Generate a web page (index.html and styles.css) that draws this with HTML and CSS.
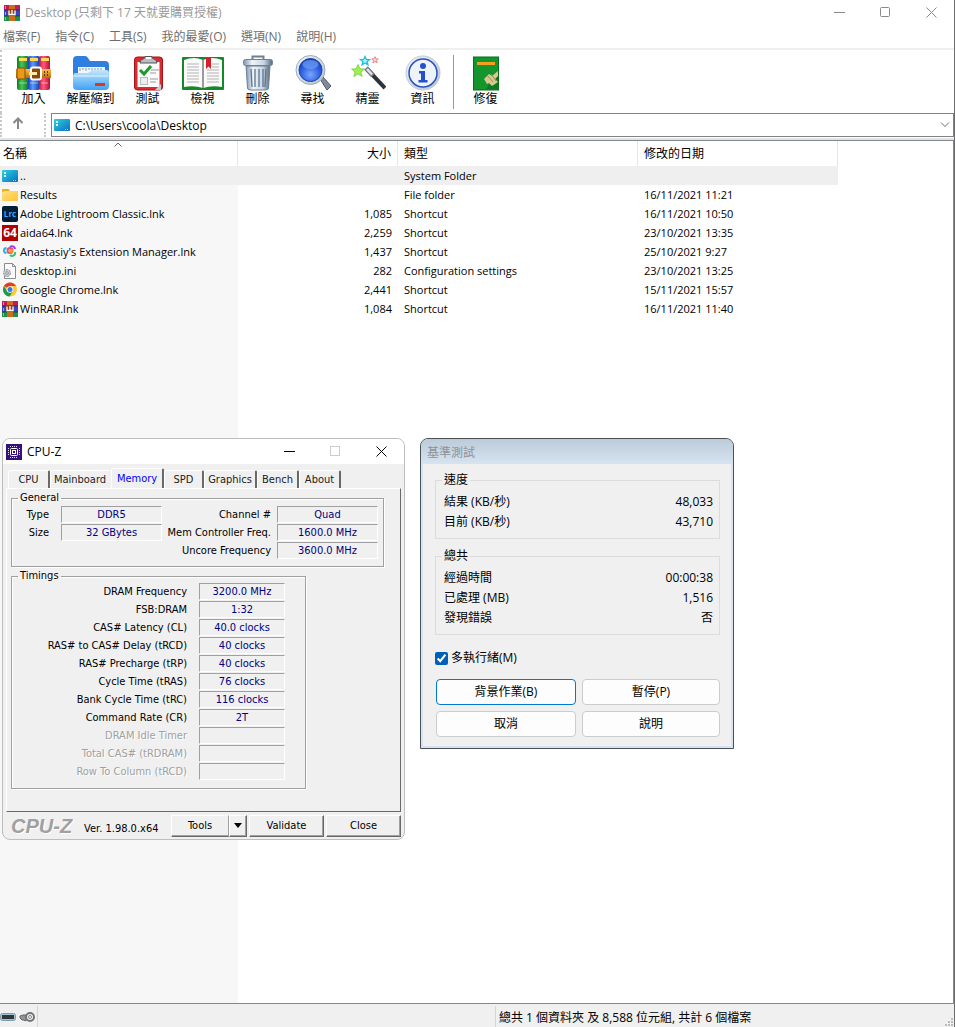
FILE: index.html
```html
<!DOCTYPE html>
<html lang="zh-Hant">
<head>
<meta charset="utf-8">
<title>Desktop</title>
<link rel="stylesheet" href="styles.css">
</head>
<body>
<svg class="defs" aria-hidden="true">
  <defs>
    <linearGradient id="gDesk" x1="0" y1="0" x2="1" y2="1"><stop offset="0" stop-color="#2fd0dc"/><stop offset="1" stop-color="#0a6fc2"/></linearGradient>
    <linearGradient id="gFold" x1="0" y1="0" x2="0" y2="1"><stop offset="0" stop-color="#c3e6ff"/><stop offset="1" stop-color="#3fa2f5"/></linearGradient>
    <linearGradient id="gYel" x1="0" y1="0" x2="1" y2="1"><stop offset="0" stop-color="#ffe187"/><stop offset="1" stop-color="#fdc52f"/></linearGradient>
    <linearGradient id="gBin" x1="0" y1="0" x2="1" y2="0"><stop offset="0" stop-color="#7f96ae"/><stop offset=".3" stop-color="#eef4f9"/><stop offset=".7" stop-color="#c9d6e3"/><stop offset="1" stop-color="#54697f"/></linearGradient>
    <radialGradient id="gLens" cx=".5" cy=".7" r=".7"><stop offset="0" stop-color="#7aa6ff"/><stop offset=".6" stop-color="#2d5fe0"/><stop offset="1" stop-color="#133ab4"/></radialGradient>
    <linearGradient id="gSteel" x1="0" y1="0" x2="1" y2="1"><stop offset="0" stop-color="#f4f7fa"/><stop offset="1" stop-color="#b4c0cc"/></linearGradient>
    <linearGradient id="bR" x1="0" y1="0" x2="1" y2="0"><stop offset="0" stop-color="#c4143c"/><stop offset=".4" stop-color="#ff5a7c"/><stop offset="1" stop-color="#b80f35"/></linearGradient>
    <linearGradient id="bG" x1="0" y1="0" x2="1" y2="0"><stop offset="0" stop-color="#0d7c22"/><stop offset=".4" stop-color="#45c656"/><stop offset="1" stop-color="#087019"/></linearGradient>
    <linearGradient id="bB" x1="0" y1="0" x2="1" y2="0"><stop offset="0" stop-color="#1c3fb8"/><stop offset=".4" stop-color="#5b9cff"/><stop offset="1" stop-color="#1636a0"/></linearGradient>
    <linearGradient id="gBelt" x1="0" y1="0" x2="0" y2="1"><stop offset="0" stop-color="#ffc24a"/><stop offset="1" stop-color="#b96a05"/></linearGradient>
    <symbol id="desk" viewBox="0 0 16 16"><rect y="2" width="16" height="12" rx="1" fill="url(#gDesk)"/><path d="M2 4h2v2H2zM2 7h2v2H2z" fill="#d8f6fb"/><path d="M11 12h1v1h-1zM13 12h1v1h-1z" fill="#9bdcf5"/></symbol>
    <symbol id="books" viewBox="0 0 16 16"><path fill="#c21c52" d="M0 0h16v5H0z"/><path fill="#3c44c4" d="M0 5h16v6H0z"/><path fill="#1b9448" d="M0 11h16v5H0z"/><path fill="#2a1440" d="M0 4.500h16v1H0zM0 10.500h16v1H0z" opacity=".6"/><path fill="#e8a020" d="M1 1h1v3H1zM1 7h1v3H1zM1 12h1v3H1z"/><path fill="#d06a1c" d="M5 0h6v16H5z"/><path fill="#8c3f0c" d="M4 4h8v7H4z"/><path d="M5 5.500v4h6v-4M8 5v4" stroke="#fff" stroke-width="1.300" fill="none"/></symbol>
    <symbol id="folder" viewBox="0 0 16 16"><path fill="#f0ac13" d="M0 3a1 1 0 0 1 1-1h5l2 2h7a1 1 0 0 1 1 1v3H0z"/><rect y="4" width="16" height="10" rx="1" fill="url(#gYel)"/><path d="M0 5V4h6l2-2" fill="#f0ac13"/></symbol>
    <path id="star" d="M0-10L3-3.500 10-3 4.500 1.500 6.500 8.500 0 4.500-6.500 8.500-4.500 1.500-10-3-3-3.500z"/>
  </defs>
</svg>

<main class="rar">
  <header class="titlebar">
    <svg class="ico16"><use href="#books"/></svg>
    <h1>Desktop (只剩下 17 天就要購買授權)</h1>
    <div class="controls">
      <button aria-label="最小化"><svg width="11" height="11"><path d="M0 5.500h11"/></svg></button>
      <button aria-label="最大化"><svg width="11" height="11"><rect x=".5" y=".5" width="9" height="9" rx="1"/></svg></button>
      <button aria-label="關閉"><svg width="11" height="11"><path d="M.5.500l10 10M10.500.500l-10 10"/></svg></button>
    </div>
  </header>
  <nav class="menubar">
    <button>檔案(F)</button><button>指令(C)</button><button>工具(S)</button><button>我的最愛(O)</button><button>選項(N)</button><button>說明(H)</button>
  </nav>
  <div class="toolbar">
    <button>
      <svg viewBox="0 0 36 36"><rect x="1" y="1" width="12" height="34" rx="2" fill="url(#bG)"/><rect x="12" y="1" width="12" height="34" rx="2" fill="url(#bB)"/><rect x="23" y="1" width="11" height="34" rx="2" fill="url(#bR)"/><path d="M3 3h8v3H3zM14 3h8v3h-8zM25 3h8v3h-8z" fill="#ffd95a"/><path d="M3 28h8M14 28h8M25 28h7" stroke="#fff" stroke-opacity=".5"/><rect y="14" width="35" height="9" fill="url(#gBelt)"/><rect x="1" y="13" width="8" height="11" rx="1" fill="#e79a1c" stroke="#8c4d03"/><rect x="15" y="12.500" width="10" height="12" rx="2" fill="#8a4a07" stroke="#fff" stroke-width="2"/><path d="M13 18.500h8" stroke="#ffe9b0" stroke-width="3"/><path d="M28 17h1M31 17h1M28 20h1M31 20h1" stroke="#6b3903" stroke-width="2"/></svg>
      加入</button>
    <button class="wide">
      <svg viewBox="0 0 36 36"><path d="M0 5q0-4 4-4h8q2 0 3 2l2 3h15q4 0 4 4v20H0z" fill="#2f7fe0"/><rect x="5" y="12" width="27" height="14" fill="#f3f7fb"/><path d="M7 13v3M10 13v2M13 13v3M16 13v2M19 13v3M22 13v2M25 13v3M28 13v2" stroke="#8c9aaa"/><path d="M0 21q0-3 3-3h12l4-3h14q3 0 3 3v13q0 4-4 4H4q-4 0-4-4z" fill="url(#gFold)"/><path d="M1 21h34" stroke="#e6f5ff"/><path d="M22 28h10v3H22z" fill="#d93a1c"/></svg>
      解壓縮到</button>
    <button>
      <svg viewBox="0 0 36 36"><rect x="4.500" y="2" width="28" height="33" rx="3" fill="#dc2a2d" stroke="#a3131a"/><path d="M7.500 7h22v25h-22z" fill="#fafafa"/><path d="M10 8q0-3 3-4 2 0 2-2.500h7q0 2.500 2 2.500 3 1 3 4z" fill="#b9bec4" stroke="#535860"/><path d="M16 3h5" stroke="#fff" stroke-width="2"/><path d="M10 15l4 4 7-8" fill="none" stroke="#1c9a2c" stroke-width="3"/><rect x="10.500" y="22.500" width="7" height="7" fill="#eee" stroke="#bbb"/><path d="M21 15h8M20 18h6M20 24h8M20 27h6" stroke="#999"/><path d="M25 35l6-6v6z" fill="#c9ccd0"/></svg>
      測試</button>
    <button>
      <svg class="book" viewBox="0 0 42 36"><rect y="2" width="42" height="33" rx="1" fill="#14882a"/><path d="M2 5q10-4 19 0 9-4 19 0v27q-10-2-19 1-9-3-19-1z" fill="#fafafa"/><path d="M21 5v28" stroke="#9b9b9b" stroke-width="2"/><path d="M5 9h12M5 12h12M5 15h12M5 18h12M5 21h12M5 24h12M5 27h12M30 9h7M30 12h7M25 15h12M25 18h12M25 21h12M25 24h12M25 27h12" stroke="#b3b3b3"/><path d="M24 3h5v11l-2.500-2.500L24 14z" fill="#d3202b"/></svg>
      檢視</button>
    <button>
      <svg viewBox="0 0 36 36"><path d="M12.500 5V1.500h11V5" fill="none" stroke="#6d8197" stroke-width="2"/><path d="M6 11h24l-1.500 22q0 2-3 2h-15q-3 0-3-2z" fill="url(#gBin)" stroke="#6c8299"/><path d="M11 14l1 18M15 14v18M19 14v18M23 14v18M26 14l-1 18" stroke="#5f768e" stroke-width="1.300"/><rect x="3.500" y="4.500" width="29" height="6" rx="2" fill="url(#gBin)" stroke="#6c8299"/></svg>
      刪除</button>
    <button>
      <svg viewBox="0 0 36 36"><path d="M25 24l3-2 8 9-4 4z" fill="#818c98" stroke="#515a66"/><circle cx="15.500" cy="15" r="14.500" fill="url(#gSteel)" stroke="#9aabbd"/><circle cx="15.500" cy="15" r="11.500" fill="url(#gLens)" stroke="#1d44a8"/><ellipse cx="15.500" cy="9.500" rx="8" ry="4.500" fill="#6f9cf3" opacity=".7"/></svg>
      尋找</button>
    <button>
      <svg viewBox="0 0 36 36"><path d="M17 14l18 19" stroke="#2f3237" stroke-width="4"/><path d="M16 13l7 7.500" stroke="#777d84" stroke-width="5"/><path d="M17 14l5 5.500" stroke="#dfe4e8" stroke-width="2.500"/><use href="#star" transform="translate(8 16) scale(.65)" fill="#9df04e" stroke="#62c426"/><use href="#star" transform="translate(15 6) scale(.45)" fill="#a5f3ff" stroke="#22bde8" stroke-width="3"/><use href="#star" transform="translate(25 5) scale(.33)" fill="#ffd9d9" stroke="#ea8585" stroke-width="3"/></svg>
      精靈</button>
    <button>
      <svg viewBox="0 0 36 36"><circle cx="18" cy="18" r="17" fill="url(#gSteel)" stroke="#c0cad4"/><circle cx="18" cy="18" r="14" fill="#eef3f9" stroke="#2952bd" stroke-width="1.500"/><circle cx="18" cy="11" r="3" fill="#2350cf"/><path d="M14 16h6v9h2.500v2.500h-9V25H16v-6.500h-2z" fill="#2350cf"/></svg>
      資訊</button>
    <span class="sep"></span>
    <button>
      <svg viewBox="0 0 36 36"><rect x="5.500" y="2" width="25" height="33" fill="#14962c" stroke="#0a6d1b"/><path d="M9 7h18v3H9z" fill="#f4a020"/><path d="M18 34L30 16v18z" fill="#0c7a20"/><path d="M16 24l5-5 3 2 6-5v5l-3 3 3 3-6 4-3-3-2 1z" fill="#d8c892"/><path d="M19 20l6 7M23 19l5 7" stroke="#9a8e5a"/></svg>
      修復</button>
  </div>
  <div class="address">
    <button class="up" aria-label="上一層"><svg width="12" height="12"><path d="M6 12V2M1.500 6L6 1.500 10.500 6"/></svg></button>
    <label class="path"><svg class="ico16"><use href="#desk"/></svg><input type="text" aria-label="路徑" value="C:\Users\coola\Desktop"><svg class="chev" width="10" height="6"><path d="M1 .5l4 4 4-4"/></svg></label>
  </div>
  <section class="list">
    <table>
      <colgroup><col class="c-name"><col class="c-size"><col class="c-type"><col class="c-date"></colgroup>
      <thead><tr><th>名稱<svg class="sort" width="8" height="5"><path d="M.5 4.500L4 1l3.500 3.500"/></svg></th><th>大小</th><th>類型</th><th>修改的日期</th></tr></thead>
      <tbody>
        <tr class="sel"><td><svg class="ico16"><use href="#desk"/></svg>..</td><td></td><td>System Folder</td><td></td></tr>
        <tr><td><svg class="ico16"><use href="#folder"/></svg>Results</td><td></td><td>File folder</td><td>16/11/2021 11:21</td></tr>
        <tr><td><svg class="ico16" viewBox="0 0 16 16"><rect width="16" height="16" rx="2" fill="#001e36"/><text x="8" y="11" class="lrc">Lrc</text></svg>Adobe Lightroom Classic.lnk</td><td>1,085</td><td>Shortcut</td><td>16/11/2021 10:50</td></tr>
        <tr><td><svg class="ico16" viewBox="0 0 16 16"><rect width="16" height="16" fill="#b40000"/><text x="8" y="12" class="n64">64</text></svg>aida64.lnk</td><td>2,259</td><td>Shortcut</td><td>23/10/2021 13:35</td></tr>
        <tr><td><svg class="ico16" viewBox="0 0 16 16" fill="none" stroke-width="2"><path d="M4.500 4a2.500 2.500 0 1 0 0 5" stroke="#1ab6ee"/><path d="M8 3a3 3 0 0 1 5 2" stroke="#9a3df0"/><path d="M13 8a3 3 0 0 1-5 3" stroke="#2ec66e"/><circle cx="8" cy="6.500" r="2.500" stroke="#f04b62"/><circle cx="9" cy="7" r="1" fill="#ff9b2c" stroke="#ff9b2c"/></svg>Anastasiy's Extension Manager.lnk</td><td>1,437</td><td>Shortcut</td><td>25/10/2021 9:27</td></tr>
        <tr><td><svg class="ico16" viewBox="0 0 16 16"><path d="M2.500.500h8l3 3v12h-11z" fill="#fafafa" stroke="#8c8c8c"/><path d="M10.500.500v3h3" fill="none" stroke="#8c8c8c"/><circle cx="5" cy="10" r="3.500" fill="#c8cdd2" stroke="#8a9097" stroke-dasharray="2 1"/><circle cx="5" cy="10" r="1.300" fill="#fff" stroke="#8a9097"/></svg>desktop.ini</td><td>282</td><td>Configuration settings</td><td>23/10/2021 13:25</td></tr>
        <tr><td><svg class="ico16" viewBox="0 0 16 16"><circle cx="8" cy="7.500" r="7" fill="#fcc934"/><path d="M8 7.500L1.900 4A7 7 0 0 1 14 4H8z" fill="#e33b2e"/><path d="M1.900 4a7 7 0 0 0 5.600 10.500L11 9 5 9z" fill="#1d9a50"/><circle cx="8" cy="7.500" r="3.300" fill="#fff"/><circle cx="8" cy="7.500" r="2.500" fill="#3b78e7"/></svg>Google Chrome.lnk</td><td>2,441</td><td>Shortcut</td><td>15/11/2021 15:57</td></tr>
        <tr><td><svg class="ico16"><use href="#books"/></svg>WinRAR.lnk</td><td>1,084</td><td>Shortcut</td><td>16/11/2021 11:40</td></tr>
      </tbody>
    </table>
  </section>
  <footer class="status">
    <div class="s-icons">
      <svg width="16" height="8"><rect x=".5" y=".5" width="15" height="7" rx="2" fill="#a9c4d4" stroke="#7f9dae"/><rect x="2" y="2" width="12" height="4" fill="#30363b"/></svg>
      <svg width="17" height="12"><path d="M1 5l3-1h5v4l-3 2-1-1H3L1 7z" fill="#8d949a" stroke="#666"/><circle cx="11" cy="6" r="4" fill="#f0f0f0" stroke="#70757a" stroke-width="2"/><circle cx="11" cy="6" r="1.500" fill="#fff" stroke="#888"/></svg>
    </div>
    <div class="s-mid"></div>
    <div class="s-text">總共 1 個資料夾 及 8,588 位元組, 共計 6 個檔案</div>
    <svg class="grip" width="9" height="9"><path d="M7 1h2v2H7zM7 4h2v2H7zM7 7h2v2H7zM4 4h2v2H4zM4 7h2v2H4zM1 7h2v2H1z"/></svg>
  </footer>
</main>

<section class="cpuz">
  <header>
    <svg class="ico16" viewBox="0 0 16 16"><rect width="16" height="16" fill="#33127a"/><rect x="4.500" y="4.500" width="7" height="7" rx="1" fill="none" stroke="#fff"/><rect x="6.500" y="6.500" width="3" height="3" fill="none" stroke="#fff"/><path d="M4 2.500h8M4 13.500h8M2.500 4v8M13.500 4v8" stroke="#e3d8fa" stroke-dasharray="1 1"/></svg>
    <h2>CPU-Z</h2>
    <div class="controls">
      <button aria-label="Minimize"><svg width="11" height="11"><path d="M0 5.500h11"/></svg></button>
      <button aria-label="Maximize" disabled><svg width="11" height="11"><rect x=".5" y=".5" width="9" height="9"/></svg></button>
      <button aria-label="Close window"><svg width="11" height="11"><path d="M.5.500l10 10M10.500.500l-10 10"/></svg></button>
    </div>
  </header>
  <div class="tabs">
    <button class="t-cpu">CPU</button><button class="t-main">Mainboard</button><button class="t-mem on">Memory</button><button class="t-spd">SPD</button><button class="t-gfx">Graphics</button><button class="t-end">Bench</button><button class="t-end">About</button>
  </div>
  <div class="panel">
    <fieldset class="general">
      <legend>General</legend>
      <div class="kv"><label for="ty">Type</label><input id="ty" readonly value="DDR5"><label for="sz">Size</label><input id="sz" readonly value="32 GBytes"></div>
      <div class="kv right"><label for="ch">Channel #</label><input id="ch" readonly value="Quad"><label for="mc">Mem Controller Freq.</label><input id="mc" readonly value="1600.0 MHz"><label for="un">Uncore Frequency</label><input id="un" readonly value="3600.0 MHz"></div>
    </fieldset>
    <fieldset class="timings">
      <legend>Timings</legend>
      <div class="kv">
        <label for="a1">DRAM Frequency</label><input id="a1" readonly value="3200.0 MHz">
        <label for="a2">FSB:DRAM</label><input id="a2" readonly value="1:32">
        <label for="a3">CAS# Latency (CL)</label><input id="a3" readonly value="40.0 clocks">
        <label for="a4">RAS# to CAS# Delay (tRCD)</label><input id="a4" readonly value="40 clocks">
        <label for="a5">RAS# Precharge (tRP)</label><input id="a5" readonly value="40 clocks">
        <label for="a6">Cycle Time (tRAS)</label><input id="a6" readonly value="76 clocks">
        <label for="a7">Bank Cycle Time (tRC)</label><input id="a7" readonly value="116 clocks">
        <label for="a8">Command Rate (CR)</label><input id="a8" readonly value="2T">
        <label for="a9" class="off">DRAM Idle Timer</label><input id="a9" disabled>
        <label for="b1" class="off">Total CAS# (tRDRAM)</label><input id="b1" disabled>
        <label for="b2" class="off">Row To Column (tRCD)</label><input id="b2" disabled>
      </div>
    </fieldset>
  </div>
  <footer>
    <strong>CPU-Z</strong><span>Ver. 1.98.0.x64</span>
    <div class="btns"><div class="split"><button>Tools</button><button class="drop" aria-label="Tools menu"><svg width="8" height="5"><path d="M0 0h8L4 5z"/></svg></button></div><button>Validate</button><button>Close</button></div>
  </footer>
</section>

<section class="bench">
  <h2>基準測試</h2>
  <div class="body">
    <fieldset><legend>速度</legend>
      <dl><div><dt>結果 (KB/秒)</dt><dd>48,033</dd></div><div><dt>目前 (KB/秒)</dt><dd>43,710</dd></div></dl>
    </fieldset>
    <fieldset><legend>總共</legend>
      <dl><div><dt>經過時間</dt><dd>00:00:38</dd></div><div><dt>已處理 (MB)</dt><dd>1,516</dd></div><div><dt>發現錯誤</dt><dd>否</dd></div></dl>
    </fieldset>
    <label class="check"><input type="checkbox" checked>多執行緒(M)</label>
    <div class="grid"><button class="def">背景作業(B)</button><button>暫停(P)</button><button>取消</button><button>說明</button></div>
  </div>
</section>
</body>
</html>
```
FILE: styles.css
```css
* { box-sizing: border-box; }
body {
  margin: 0;
  font: 12px/16px "Open Sans", "Noto Sans CJK TC", sans-serif;
  color: #000;
  background: #fff;
}
button, input { font: inherit; color: inherit; margin: 0; padding: 0; border: 0; background: none; }
h1, h2, dl, dd { margin: 0; font-size: 12px; font-weight: 400; }
fieldset { margin: 0; min-width: 0; }
.defs { position: absolute; width: 0; height: 0; }
.ico16 { width: 16px; height: 16px; flex: none; display: block; }

/* Archive manager window */
.rar { display: flex; flex-direction: column; min-height: 100vh; border-right: 1px solid #6c6c6c; }
.titlebar { display: flex; align-items: center; gap: 5px; height: 25px; padding-left: 4px; color: #999; }
.controls { display: flex; margin-left: auto; }
.controls button { width: 46px; height: 24px; display: flex; align-items: center; justify-content: center; }
.controls svg { fill: none; stroke: #8a8a8a; }
.menubar { display: flex; gap: 15px; padding: 4px 3px 3px; border-bottom: 2px solid #f0f0f0; color: #6d6d6d; }
.toolbar { display: flex; height: 63px; padding: 5px 0 0 4px; border-left: 2px dotted #c8c8c8; }
.toolbar button { width: 55px; display: flex; flex-direction: column; align-items: center; justify-content: flex-start; white-space: nowrap; }
.toolbar button.wide { width: 59px; }
.toolbar svg { width: 36px; height: 36px; display: block; }
.toolbar .book { width: 42px; }
.toolbar .sep { width: 1px; height: 54px; margin: 0 4px 0 3px; background: #999; }
.address { display: flex; height: 27px; border-bottom: 2px solid #e3e3e3; padding-bottom: 1px; }
.up { width: 46px; border-right: 2px dotted #c8c8c8; border-left: 2px dotted #c8c8c8; padding-left: 10px; text-align: left; }
.up svg { fill: none; stroke: #888; stroke-width: 2; }
.path { flex: 1; display: flex; align-items: center; gap: 5px; margin-left: 5px; padding: 0 3px 0 2px; border: 1px solid #828282; }
.path input { flex: 1; min-width: 0; height: 20px; outline: 0; }
.chev, .sort { fill: none; stroke: #666; }
.list { flex: 1; border-top: 1px solid #828790; border-right: 1px solid #828790; background: linear-gradient(#fff, #fff) no-repeat 0 0 / 100% 25px, linear-gradient(to right, #f7f7f7 238px, #fff 238px); }
table { width: 838px; table-layout: fixed; border-collapse: separate; border-spacing: 0; }
.c-name { width: 238px; }
.c-size { width: 160px; }
.c-type { width: 240px; }
.c-date { width: 200px; }
th { height: 25px; padding: 0 6px; font-weight: 400; text-align: left; position: relative; border-right: 1px solid #e5e5e5; }
th:first-child { padding-left: 3px; }
th:nth-child(2), td:nth-child(2) { text-align: right; }
.sort { position: absolute; left: 114px; top: 1px; }
td { height: 19px; padding: 0 6px; font-size: 11px; white-space: nowrap; }
td:first-child { display: flex; align-items: center; gap: 2px; padding: 0 2px; }
.sel { background: #efefef; }
.lrc { font: 700 8px "Open Sans", sans-serif; fill: #31a8ff; text-anchor: middle; }
.n64 { font: 700 12px "Open Sans", sans-serif; fill: #fff; text-anchor: middle; }
.status { display: flex; height: 24px; border-top: 1px solid #828790; background: #f0f0f0; position: relative; line-height: 24px; padding-top: 2px; }
.s-icons { width: 38px; display: flex; align-items: center; gap: 3px; border-right: 1px solid #d4d4d4; }
.s-mid { width: 458px; border-right: 1px solid #d4d4d4; }
.s-text { padding-left: 3px; }
.grip { position: absolute; right: 1px; bottom: 1px; fill: #bcbcbc; }

/* CPU-Z window */
.cpuz {
  position: absolute; left: 2px; top: 438px; width: 403px;
  padding: 0 3px 2px;
  border: 1px solid #bdbdbd; border-radius: 8px; background: #f0f0f0;
  font: 11px/16px "DejaVu Sans Condensed", "DejaVu Sans", sans-serif;
}
.cpuz header { display: flex; align-items: center; gap: 5px; height: 25px; margin: 0 -3px; padding-left: 3px; background: #fff; border-radius: 7px 7px 0 0; }
.cpuz h2 { font: 12px/16px "Open Sans", sans-serif; }
.cpuz .controls svg { stroke: #000; }
.cpuz .controls button:disabled svg { stroke: #ccc; }
.tabs { display: flex; align-items: flex-end; height: 24px; padding-left: 2px; }
.tabs button { height: 18px; padding: 0; border: 1px solid #fff; border-right: 2px solid #696969; border-bottom: 0; border-radius: 3px 2px 0 0; color: #222; line-height: 16px; }
.tabs .t-cpu { width: 42px; }
.tabs .t-main { width: 61px; border-right-color: #f0f0f0; }
.tabs .t-mem { width: 53px; }
.tabs .t-spd { width: 40px; }
.tabs .t-gfx { width: 53px; }
.tabs .t-end { width: 42px; }
.tabs .on { height: 20px; color: #00f; }
.panel { border: 1px solid #696969; border-left-color: #fff; border-top-color: #fff; height: 324px; padding: 2px 4px; }
.panel fieldset { border: 1px solid #a0a0a0; box-shadow: 1px 1px #fff, inset 1px 1px #fff; padding: 0; }
.panel legend { margin-left: 6px; padding: 0 2px; line-height: 14px; }
.general { width: 373px; height: 76px; display: flex; justify-content: space-between; }
.kv { display: grid; grid-auto-rows: 18px; column-gap: 12px; text-align: right; align-content: start; grid-template-columns: 37px 101px; padding-top: 1px; }
.kv.right { grid-template-columns: 1fr 101px; column-gap: 6px; padding-right: 5px; }
.kv label { line-height: 18px; }
.kv input { width: 100%; height: 17px; text-align: center; color: #000080; border: 1px solid #a0a0a0; border-right-color: #fff; border-bottom-color: #fff; }
.timings { width: 295px; height: 220px; margin-top: 2px; }
.timings .kv { grid-template-columns: 175px 86px; padding-top: 0; }
.off { color: #a0a0a0; text-shadow: 1px 1px #fff; }
.cpuz footer { display: flex; align-items: center; height: 25px; padding: 2px 0 0 5px; }
.cpuz strong { font: italic 700 20px/22px "Liberation Sans", sans-serif; color: #a0a0a0; text-shadow: 1px 1px #fff; }
.cpuz footer span { margin: 6px 0 0 12px; white-space: nowrap; }
.btns { display: flex; gap: 2px; margin-left: auto; }
.btns button { width: 75px; height: 22px; border: 1px solid #fff; border-right-color: #696969; border-bottom-color: #696969; box-shadow: inset -1px -1px #a0a0a0; }
.split { display: flex; }
.split button:first-child { width: 58px; border-right-color: #a0a0a0; box-shadow: inset 0 -1px #a0a0a0; }
.split .drop { width: 18px; }
.drop svg { vertical-align: middle; }

/* Benchmark dialog */
.bench {
  position: absolute; left: 420px; top: 438px; width: 314px;
  border: 1px solid #4c4f53; border-radius: 8px 8px 0 0; background: #d6e3f2; padding: 0 2px 2px; overflow: hidden;
}
.bench h2 { margin: 0 -2px; padding: 6px 6px 3px; color: #8e9296; background: linear-gradient(#bccbd8, #d6e4f2); }
.bench .body { background: #f0f0f0; padding: 7px 11px 9px 12px; }
.bench fieldset { border: 1px solid #dcdcdc; padding: 3px 6px 6px 8px; margin-bottom: 8px; }
.bench legend { padding: 0 2px; margin-left: -2px; line-height: 18px; }
.bench dl div { display: flex; justify-content: space-between; line-height: 20px; }
.check { display: flex; align-items: center; gap: 3px; margin: 15px 0 13px; }
.check input { width: 13px; height: 13px; accent-color: #005fb8; }
.grid { display: grid; grid-template-columns: 140px 1fr; gap: 6px; padding-left: 1px; }
.grid button { height: 26px; border: 1px solid #ccc; border-radius: 4px; background: #fdfdfd; }
.grid .def { border-color: #0078d4; }
```
